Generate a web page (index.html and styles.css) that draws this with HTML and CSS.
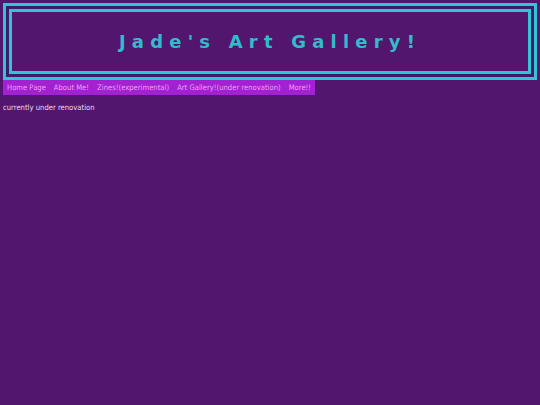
FILE: index.html
```html
<!DOCTYPE html>
<html>
<head>
<meta charset="utf-8">
<title>Jade's Art Gallery!</title>
<link rel="stylesheet" href="styles.css">
</head>
<body>
<header class="frame">
  <div class="frame-inner">
    <h1 class="title">Jade's Art Gallery!</h1>
  </div>
</header>
<nav class="nav">
  <a class="nav-link" href="#">Home Page</a>
  <a class="nav-link" href="#">About Me!</a>
  <a class="nav-link" href="#">Zines!(experimental)</a>
  <a class="nav-link" href="#">Art Gallery!(under renovation)</a>
  <a class="nav-link" href="#">More!!</a>
</nav>
<p class="note">currently under renovation</p>
</body>
</html>
```
FILE: styles.css
```css
html, body {
  margin: 0;
  padding: 0;
}
body {
  background: #52166e;
  padding: 3px;
  font-family: "DejaVu Sans Condensed", "DejaVu Sans", sans-serif;
  font-size: 7.6px;
  color: #eadcf2;
}
.frame {
  border: 3px solid #33c3d3;
  background: #3b1c6e;
  padding: 3px;
}
.frame-inner {
  border: 3px solid #33c3d3;
  background: #52166e;
  height: 59px;
  display: flex;
  align-items: center;
  justify-content: center;
}
.title {
  margin: 0;
  font-family: "DejaVu Sans", sans-serif;
  font-size: 18px;
  font-weight: 700;
  letter-spacing: 6.2px;
  color: #31bccc;
  line-height: 1;
}
.nav {
  display: inline-flex;
  background: #a221d0;
  height: 15px;
  align-items: center;
}
.nav-link {
  color: #eea0f4;
  text-decoration: none;
  padding: 0 4px;
}
.note {
  margin: 8px 0 0 0;
}
```
